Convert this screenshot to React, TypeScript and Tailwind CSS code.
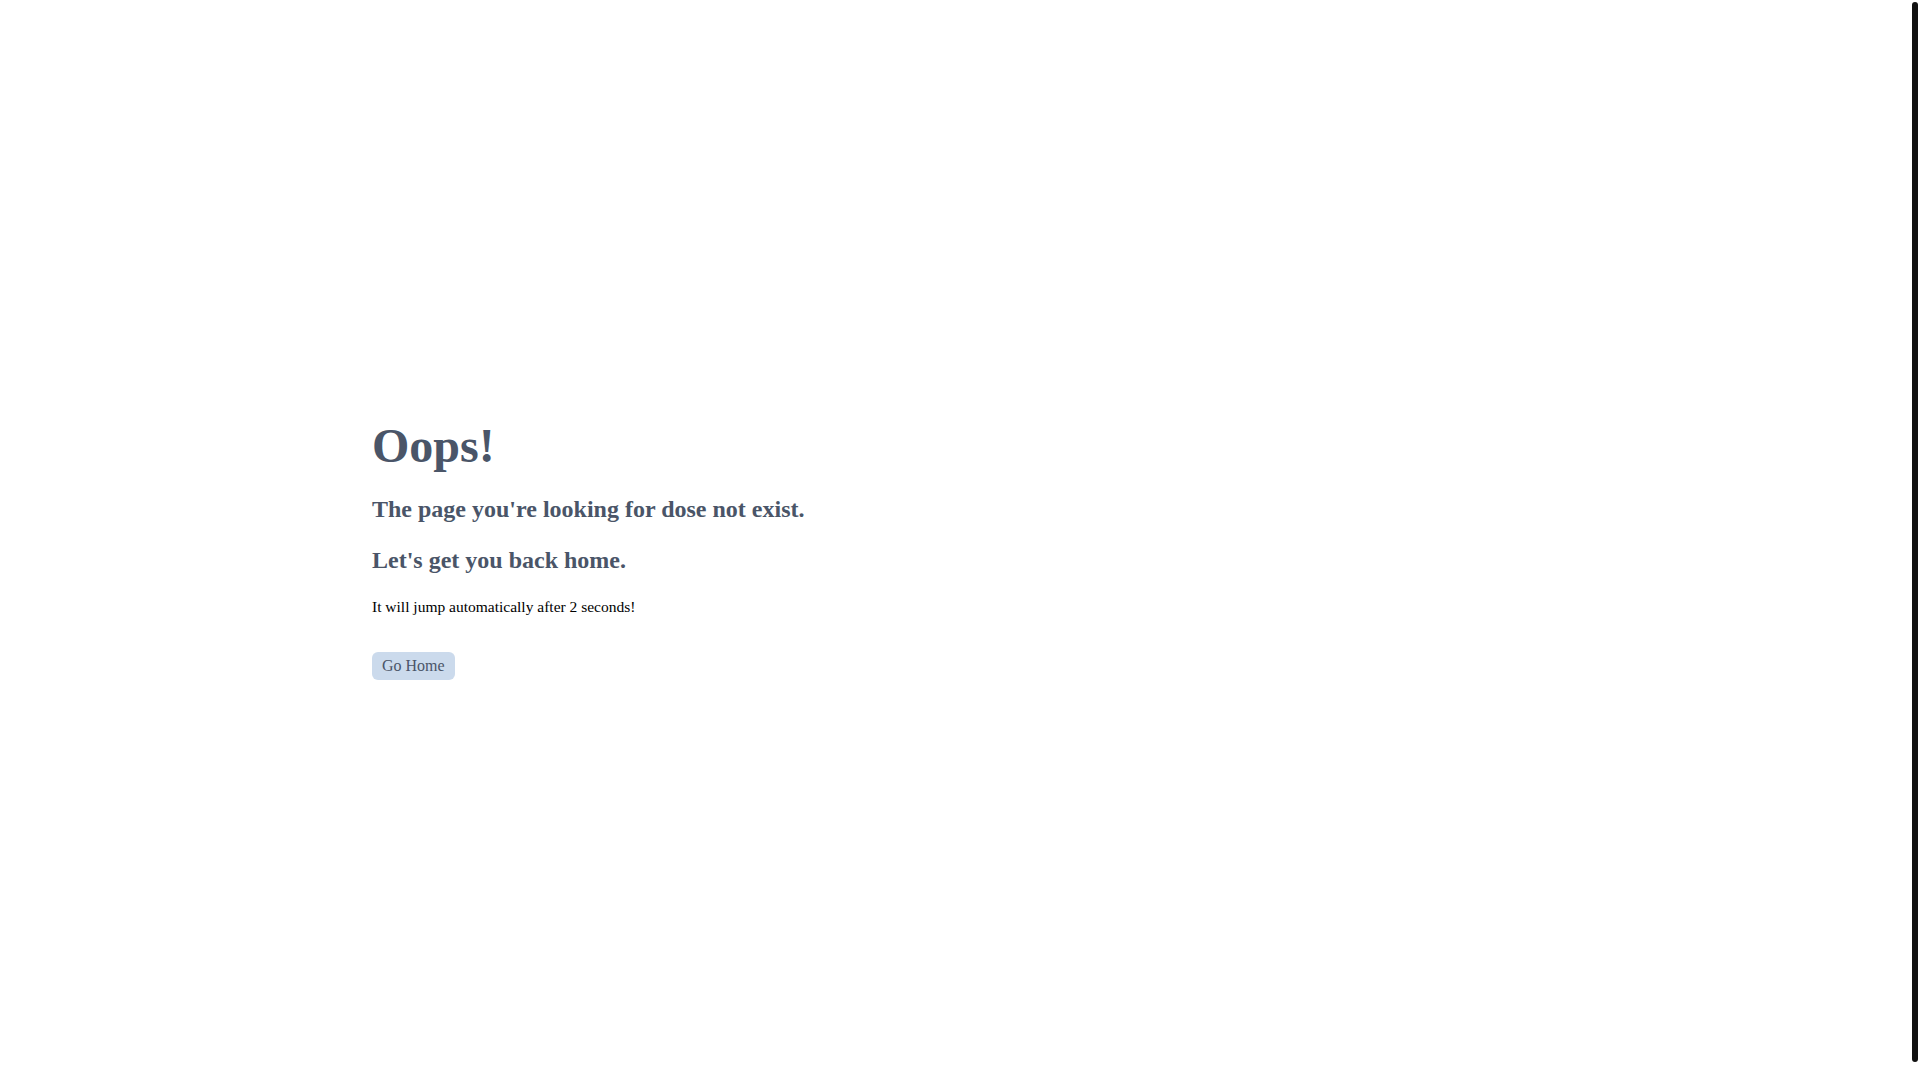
import React from 'react';

// Not-found page: heading block + auto redirect notice
export default function App() {
  return (
    <div className="relative min-h-screen w-full bg-white font-['Liberation_Serif',_'Times_New_Roman',_serif]">
      <main className="pl-[372px] pt-[422px]">
        <h1 className="text-[48px] leading-[48px] font-bold text-[#4a5568]">Oops!</h1>
        <h2 className="mt-[27px] text-[24px] leading-[24px] font-bold text-[#4a5568]">
          The page you're looking for dose not exist.
        </h2>
        <h3 className="mt-[27px] text-[24px] leading-[24px] font-bold text-[#4a5568]">
          Let's get you back home.
        </h3>
        <p className="mt-[27px] text-[15.5px] leading-[16px] text-black">
          It will jump automatically after 2 seconds!
        </p>
        <button
          type="button"
          className="mt-[37px] flex h-[28px] items-center rounded-[6px] bg-[#cbdaec] px-[10px] text-[16px] leading-[16px] text-[#4a5568]"
        >
          Go Home
        </button>
      </main>
      {/* overlay scrollbar thumb */}
      <div className="fixed right-[2px] top-[2px] bottom-[18px] w-[6px] rounded-full bg-[#111111]" />
    </div>
  );
}
